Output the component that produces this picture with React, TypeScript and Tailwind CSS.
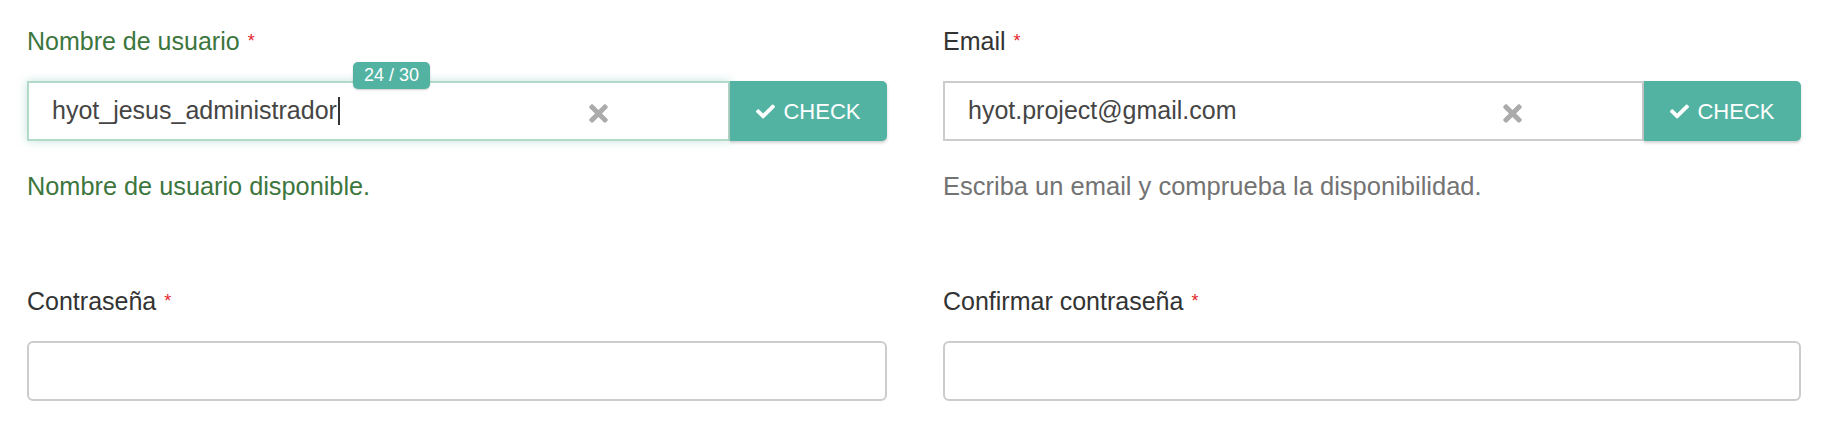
import { FaCheck, FaTimes } from "react-icons/fa";

type FieldProps = {
  label: string;
  success?: boolean;
  children: React.ReactNode;
  help?: React.ReactNode;
};

function Field({ label, success, children, help }: FieldProps) {
  return (
    <div className="flex flex-col">
      <label
        className={`text-[25px] leading-[28px] ${success ? "text-[#3c763d]" : "text-[#333]"}`}
      >
        {label}
        <span className="ml-[8px] align-[3px] text-[18px] text-[#e3262b]">*</span>
      </label>
      <div className="mt-[26px]">{children}</div>
      {help}
    </div>
  );
}

function CheckInput({
  value,
  focused,
  counter,
}: {
  value: string;
  focused?: boolean;
  counter?: string;
}) {
  return (
    <div className="relative flex h-[60px]">
      {counter && (
        <span className="absolute top-[-19px] left-[326px] z-10 flex h-[27px] w-[77px] items-center justify-center rounded-[5px] bg-[#53b3a2] text-[18px] text-white shadow-[0_1px_2px_rgba(0,0,0,0.2)]">
          {counter}
        </span>
      )}
      <div
        className={`flex flex-1 items-center border-2 pr-[116px] pl-[23px] ${
          focused
            ? "border-[#b3d9c9] shadow-[0_0_9px_rgba(83,179,162,0.35)]"
            : "border-[#cccccc]"
        }`}
      >
        <div className="flex flex-1 items-center text-[25px] text-[#454545]">
          <span>{value}</span>
          {focused && <span className="ml-[1px] h-[28px] w-[2px] bg-[#333]" />}
        </div>
        <FaTimes className="mt-[4px] text-[27px] text-[#ababab]" />
      </div>
      <button className="flex w-[157px] items-center justify-center gap-[8px] rounded-r-[5px] bg-[#53b3a2] text-[22px] text-white shadow-[0_2px_3px_rgba(0,0,0,0.18)]">
        <FaCheck className="text-[19px]" />
        CHECK
      </button>
    </div>
  );
}

function PasswordInput() {
  return <div className="h-[60px] rounded-[6px] border-2 border-[#cccccc] bg-white" />;
}

export default function App() {
  return (
    <div className="min-h-[423px] bg-white font-['Liberation_Sans',Arial,sans-serif]">
      <div className="grid grid-cols-[860px_858px] gap-x-[56px] gap-y-[87px] pt-[27px] pl-[27px]">
        <Field
          label="Nombre de usuario"
          success
          help={
            <p className="mt-[31px] text-[25.3px] leading-[28px] text-[#3c763d]">
              Nombre de usuario disponible.
            </p>
          }
        >
          <CheckInput value="hyot_jesus_administrador" focused counter="24 / 30" />
        </Field>
        <Field
          label="Email"
          help={
            <p className="mt-[31px] text-[25.5px] leading-[28px] text-[#737373]">
              Escriba un email y comprueba la disponibilidad.
            </p>
          }
        >
          <CheckInput value="hyot.project@gmail.com" />
        </Field>
        <Field label="Contraseña">
          <PasswordInput />
        </Field>
        <Field label="Confirmar contraseña">
          <PasswordInput />
        </Field>
      </div>
    </div>
  );
}
